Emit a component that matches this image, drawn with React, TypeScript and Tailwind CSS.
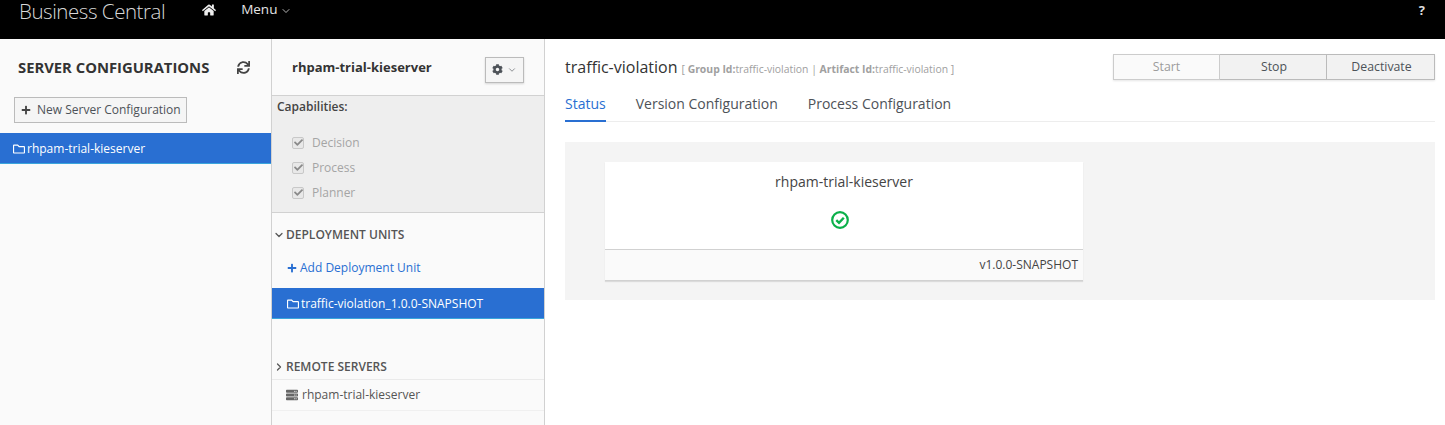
import React from 'react';
import { ChevronDown, ChevronRight } from 'lucide-react';
import { FaCheck, FaCog, FaHome, FaPlus, FaRegFolder, FaServer, FaSync } from 'react-icons/fa';

const capabilities = ['Decision', 'Process', 'Planner'];

const App: React.FC = () => (
  <div className="w-[1445px] h-[425px] overflow-hidden bg-white text-[#363636] text-[12px] font-['Open_Sans',sans-serif]">
    {/* Верхняя панель */}
    <header className="h-[39px] bg-black text-[#f0f0f0] flex items-start">
      <span className="ml-[19px] text-[20.5px] leading-[22px] font-light text-[#d8d8d8] tracking-[-0.45px]">Business Central</span>
      <FaHome className="ml-[37px] mt-[3px] text-[14px] text-[#eee]" />
      <span className="ml-[25px] text-[13.5px] leading-[19px] text-[#e4e4e4]">Menu</span>
      <ChevronDown size={12} strokeWidth={1.5} className="ml-[3px] mt-[5px] text-[#eee]" />
      <span className="ml-auto mr-[20px] mt-[1px] text-[13px] leading-[18px] font-bold text-[#ddd]">?</span>
    </header>

    <div className="flex h-[386px]">
      {/* Левая колонка */}
      <aside className="w-[272px] shrink-0 bg-[#fafafa] border-r border-[#d1d1d1]">
        <div className="flex items-center justify-between pl-[18px] pr-[21px] pt-[18px]">
          <h2 className="text-[14.8px] leading-[20px] font-bold text-[#333]">SERVER CONFIGURATIONS</h2>
          <FaSync className="text-[13px] text-[#444]" />
        </div>
        <button className="mt-[20px] ml-[14px] w-[173px] h-[26px] flex items-center gap-[6px] pl-[6px] border border-[#bbb] bg-[#f5f5f5] text-[12px] text-[#4d5258]">
          <FaPlus className="text-[10px] text-[#444]" />
          New Server Configuration
        </button>
        <div className="mt-[10px] h-[31px] flex items-center pl-[13px] pt-[1px] gap-[2px] bg-[#296fd2] text-white border-b border-[#39a5dc]">
          <FaRegFolder className="text-[12px]" />
          <span>rhpam-trial-kieserver</span>
        </div>
      </aside>

      {/* Средняя колонка */}
      <section className="w-[273px] shrink-0 bg-[#fafafa] border-r border-[#d1d1d1]">
        <div className="h-[57px] flex items-center justify-between pl-[20px] pr-[20px] bg-[#fafafa] border-b border-[#d1d1d1]">
          <h3 className="text-[13px] font-bold text-[#333] mt-[2px]">rhpam-trial-kieserver</h3>
          <button className="w-[39px] h-[26px] mt-[5px] flex items-center justify-center gap-[4px] border border-[#bbb] bg-[#f5f5f5] shadow-[0_1px_2px_rgba(0,0,0,0.15)] text-[#4d5258]">
            <FaCog className="text-[11px]" />
            <ChevronDown size={10} strokeWidth={1.5} />
          </button>
        </div>
        <div className="h-[117px] bg-[#eeeeee] border-b border-[#d1d1d1] pl-[5px]">
          <div className="pt-[1px] leading-[20px] font-semibold text-[#444]">Capabilities:</div>
          <ul className="pt-[13px] pl-[15px]">
            {capabilities.map((name) => (
              <li key={name} className="h-[25px] flex items-center gap-[8px] text-[#a5a5a5]">
                <span className="w-[12px] h-[12px] flex items-center justify-center rounded-[2px] border border-[#c8c8c8] bg-[#e8e8e8]">
                  <FaCheck className="text-[9px] text-[#8a8a8a]" />
                </span>
                {name}
              </li>
            ))}
          </ul>
        </div>
        <div className="h-[43px] flex items-center gap-[1px] pl-[1px] font-semibold text-[#555] pt-[1px]">
          <ChevronDown size={12} strokeWidth={2.5} />
          DEPLOYMENT UNITS
        </div>
        <div className="h-[32px] flex items-center gap-[3px] pl-[15px] text-[#296fd2] -mt-[4px]">
          <FaPlus className="text-[10px]" />
          Add Deployment Unit
        </div>
        <div className="mt-[4px] h-[31px] flex items-center gap-[2px] pl-[15px] pt-[1px] bg-[#296fd2] text-white border-b border-[#39a5dc]">
          <FaRegFolder className="text-[12px]" />
          traffic-violation_1.0.0-SNAPSHOT
        </div>
        <div className="mt-[32px] h-[29px] flex items-center gap-[1px] pl-[1px] pt-[3px] font-semibold text-[#555] border-b border-[#eaeaea]">
          <ChevronRight size={12} strokeWidth={2.5} />
          REMOTE SERVERS
        </div>
        <div className="h-[31px] flex items-center gap-[4px] pl-[14px] text-[#555] border-b border-[#f0f0f0]">
          <FaServer className="text-[12px] text-[#666]" />
          rhpam-trial-kieserver
        </div>
      </section>

      {/* Правая часть */}
      <main className="flex-1 pl-[20px] pr-[10px]">
        <div className="flex items-start justify-between pt-[15px]">
          <div className="flex items-baseline gap-[4px] pt-[1px]">
            <span className="text-[16px] leading-[24px] text-[#333]">traffic-violation</span>
            <span className="text-[10.4px] text-[#a0a0a0]">
              [ <b>Group Id:</b>traffic-violation | <b>Artifact Id:</b>traffic-violation ]
            </span>
          </div>
          <div className="flex h-[26px] shadow-[0_1px_2px_rgba(0,0,0,0.1)] text-[12.3px]">
            <button className="w-[107px] border border-[#ccc] bg-[#fafafa] text-[#9c9c9c]">Start</button>
            <button className="w-[107px] pl-[2px] border-y border-r border-[#bbb] bg-[#f2f2f2] text-[#4d5258]">Stop</button>
            <button className="w-[108px] pl-[2px] border-y border-r border-[#bbb] bg-[#f2f2f2] text-[#4d5258]">Deactivate</button>
          </div>
        </div>

        <nav className="mt-[12px] h-[30px] flex gap-[30px] border-b border-[#ededed] text-[14px] text-[#4d5258]">
          <span className="h-[30px] pt-[1px] text-[#296fd2] border-b-2 border-[#296fd2]">Status</span>
          <span className="pt-[1px]">Version Configuration</span>
          <span className="pt-[1px]">Process Configuration</span>
        </nav>

        <div className="mt-[20px] h-[158px] bg-[#f4f4f4] pt-[20px] pl-[40px]">
          <div className="w-[478px] bg-white shadow-[0_1px_1px_rgba(0,0,0,0.1)]">
            <div className="h-[88px] flex flex-col items-center border-b border-[#d1d1d1]">
              <span className="mt-[10px] text-[14px] leading-[20px] text-[#444]">rhpam-trial-kieserver</span>
              <svg viewBox="0 0 18 18" className="w-[18px] h-[18px] mt-[19px] mr-[8px]" fill="none" stroke="#0bb04a" strokeWidth="2.2">
                <circle cx="9" cy="9" r="7.8" />
                <path d="M5.3 9.2 8 11.8 12.8 6.7" strokeWidth="2.4" />
              </svg>
            </div>
            <div className="h-[31px] flex items-center justify-end pr-[5px] bg-[#fafafa] text-[#444] border-b border-[#d1d1d1]">v1.0.0-SNAPSHOT</div>
          </div>
        </div>
      </main>
    </div>
  </div>
);

export default App;
